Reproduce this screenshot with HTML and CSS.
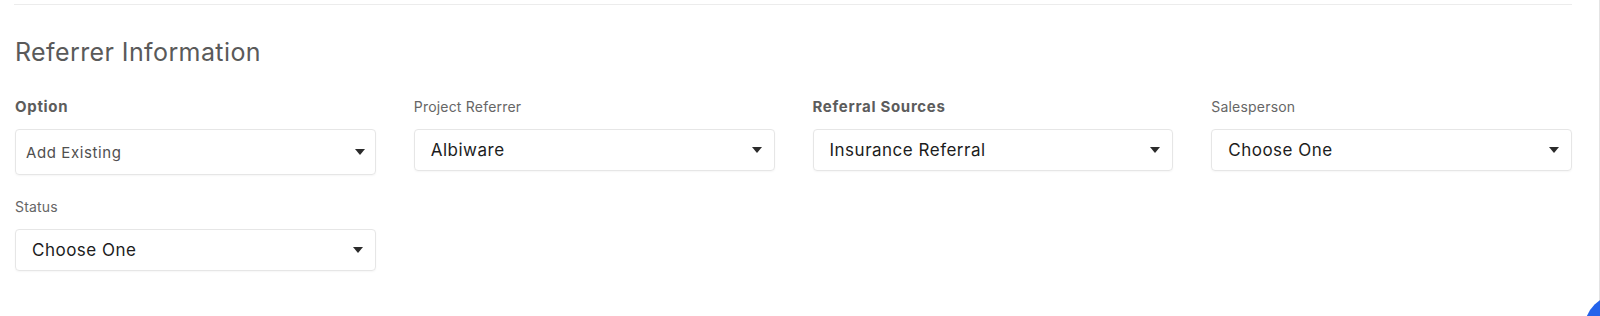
FILE: index.html
```html
<!DOCTYPE html>
<html>
<head>
    <title>Referrer Information</title>
    <link rel="stylesheet" href="styles.css">
</head>
<body>
    <div class="page">
        <div class="divider"></div>
        <h2 class="section-title">Referrer Information</h2>
        <div class="form-grid">
            <div class="field">
                <label class="field-label strong">Option</label>
                <div class="select select-native">
                    <span>Add Existing</span>
                    <i class="caret"></i>
                </div>
            </div>
            <div class="field">
                <label class="field-label">Project Referrer</label>
                <div class="select">
                    <span>Albiware</span>
                    <i class="caret"></i>
                </div>
            </div>
            <div class="field">
                <label class="field-label strong">Referral Sources</label>
                <div class="select">
                    <span>Insurance Referral</span>
                    <i class="caret"></i>
                </div>
            </div>
            <div class="field">
                <label class="field-label">Salesperson</label>
                <div class="select">
                    <span>Choose One</span>
                    <i class="caret"></i>
                </div>
            </div>
            <div class="field">
                <label class="field-label">Status</label>
                <div class="select">
                    <span>Choose One</span>
                    <i class="caret"></i>
                </div>
            </div>
        </div>
    </div>
    <div class="chat-bubble"></div>
</body>
</html>
```

FILE: styles.css
```css
html, body {
    margin: 0;
    background: #fff;
}
body {
    font-family: Inter, "Open Sans", sans-serif;
    color: #222;
    overflow: hidden;
}
.page {
    box-sizing: border-box;
    height: 316px;
    padding: 4px 27px 0 15px;
    border-right: 1px solid #e4e4e4;
}
.divider {
    border-top: 1px solid #ececec;
    margin-left: -1px;
}
.section-title {
    margin: 32px 0 29px;
    font-size: 25px;
    font-weight: 400;
    line-height: 31px;
    letter-spacing: 0.4px;
    color: #5a5a5a;
}
.form-grid {
    display: grid;
    grid-template-columns: repeat(4, 1fr);
    column-gap: 38px;
    row-gap: 22px;
    align-items: start;
}
.field-label {
    display: block;
    font-size: 14px;
    line-height: 20px;
    letter-spacing: 0.2px;
    color: #666;
    margin-bottom: 12px;
}
.field-label.strong {
    font-size: 15px;
    font-weight: 700;
    letter-spacing: 0.7px;
    color: #5c5c5c;
}
.select {
    box-sizing: border-box;
    display: flex;
    align-items: center;
    justify-content: space-between;
    height: 42px;
    padding: 0 12px 0 16px;
    border: 1px solid #e6e6e6;
    border-radius: 4px;
    box-shadow: 0 1px 2px rgba(0,0,0,0.04);
    font-size: 17px;
    letter-spacing: 0.5px;
    color: #1c1c1c;
}
.select-native {
    height: 46px;
    padding: 0 10px 0 10px;
    font-size: 15px;
    letter-spacing: 0.6px;
    color: #505050;
}
.caret {
    width: 0;
    height: 0;
    border-left: 5px solid transparent;
    border-right: 5px solid transparent;
    border-top: 6px solid #2b2b2b;
}
.chat-bubble {
    position: fixed;
    left: 1584px;
    top: 294px;
    width: 72px;
    height: 72px;
    border-radius: 50%;
    background: #2463eb;
}
```
